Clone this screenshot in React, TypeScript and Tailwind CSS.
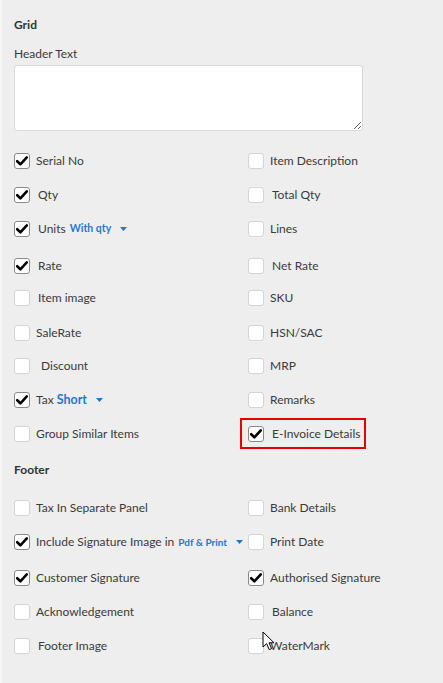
type Item = {
  label: string;
  checked?: boolean;
  pad?: string;
  extra?: "units" | "tax" | "pdf";
  boxed?: boolean;
};

type Row = { h: string; left: Item; right: Item };

const gridRows: Row[] = [
  { h: "h-[34px]", left: { label: "Serial No", checked: true }, right: { label: "Item Description" } },
  { h: "h-[34px]", left: { label: "Qty", checked: true, pad: "pl-[2px]" }, right: { label: "Total Qty", pad: "pl-[2px]" } },
  { h: "h-[37px]", left: { label: "Units", checked: true, pad: "pl-[2px]", extra: "units" }, right: { label: "Lines" } },
  { h: "h-[32px]", left: { label: "Rate", checked: true, pad: "pl-[2px]" }, right: { label: "Net Rate", pad: "pl-[2px]" } },
  { h: "h-[35px]", left: { label: "Item image", pad: "pl-[2px]" }, right: { label: "SKU" } },
  { h: "h-[33px]", left: { label: "SaleRate" }, right: { label: "HSN/SAC" } },
  { h: "h-[34px]", left: { label: "Discount", pad: "pl-[5px]" }, right: { label: "MRP" } },
  { h: "h-[34px]", left: { label: "Tax", checked: true, extra: "tax" }, right: { label: "Remarks" } },
  { h: "h-[34px]", left: { label: "Group Similar Items" }, right: { label: "E-Invoice Details", checked: true, pad: "pl-[2px]", boxed: true } },
];

const footerRows: Row[] = [
  { h: "h-[34px]", left: { label: "Tax In Separate Panel" }, right: { label: "Bank Details" } },
  { h: "h-[36px]", left: { label: "Include Signature Image in", checked: true, extra: "pdf" }, right: { label: "Print Date" } },
  { h: "h-[34px]", left: { label: "Customer Signature", checked: true }, right: { label: "Authorised Signature", checked: true } },
  { h: "h-[34px]", left: { label: "Acknowledgement" }, right: { label: "Balance", pad: "pl-[2px]" } },
  { h: "h-[34px]", left: { label: "Footer Image", pad: "pl-[2px]" }, right: { label: "WaterMark" } },
];

function Caret() {
  return (
    <svg width="7" height="4" viewBox="0 0 7 4" className="ml-[9px]">
      <path d="M0 0 L7 0 L3.5 4 Z" fill="#1e78d2" />
    </svg>
  );
}

function Box({ checked }: { checked?: boolean }) {
  return (
    <span
      className={`flex h-4 w-4 shrink-0 items-center justify-center rounded-[3px] border bg-white ${
        checked ? "border-[#8a8a8a]" : "border-[#d4d4d4]"
      }`}
    >
      {checked && (
        <svg width="12" height="10" viewBox="0 0 12 10">
          <path d="M1.2 5.2 L4.4 8.3 L10.8 1.4" fill="none" stroke="#000" strokeWidth="2.6" strokeLinecap="round" strokeLinejoin="round" />
        </svg>
      )}
    </span>
  );
}

function Check({ item }: { item: Item }) {
  return (
    <div className="relative flex h-[34px] items-center">
      {item.boxed && (
        <span className="pointer-events-none absolute left-[-8px] top-[1px] h-[31px] w-[126px] border-2 border-[#e60000]" />
      )}
      <Box checked={item.checked} />
      <span className={`ml-[6px] flex items-center whitespace-nowrap text-[12px] text-[#3a3a3a] ${item.pad ?? ""}`}>
        {item.label}
        {item.extra === "units" && (
          <>
            <span className="ml-[4px] text-[10.5px] font-bold text-[#1e78d2]">With qty</span>
            <Caret />
          </>
        )}
        {item.extra === "tax" && (
          <>
            <span className="ml-[3px] text-[12.5px] font-bold text-[#1e78d2]">Short</span>
            <Caret />
          </>
        )}
        {item.extra === "pdf" && (
          <>
            <span className="ml-[4px] text-[10px] font-bold text-[#1e78d2]">Pdf &amp; Print</span>
            <Caret />
          </>
        )}
      </span>
    </div>
  );
}

function Rows({ rows }: { rows: Row[] }) {
  return (
    <div className="flex flex-col">
      {rows.map((r) => (
        <div key={r.left.label} className={`grid grid-cols-[234px_1fr] items-start ${r.h}`}>
          <Check item={r.left} />
          <Check item={r.right} />
        </div>
      ))}
    </div>
  );
}

export default function App() {
  return (
    <div
      className="relative min-h-[683px] w-[443px] border-l-2 border-[#f6f6f6] bg-[#eeeeee] pl-3 pt-[17px]"
      style={{ fontFamily: "Lato, 'Open Sans', sans-serif" }}
    >
      <div className="h-4 text-[12px] font-bold leading-4 text-[#333]">Grid</div>
      <div className="mt-[13px] h-4 text-[12px] leading-4 text-[#3a3a3a]">Header Text</div>
      <textarea className="mt-[3px] block h-[66px] w-[349px] resize rounded-[3px] border border-[#d9d9d9] bg-white outline-none" />
      <div className="mt-[13px]">
        <Rows rows={gridRows} />
      </div>
      <div className="mt-[11px] h-4 text-[12px] font-bold leading-4 text-[#333]">Footer</div>
      <div className="mt-[13px]">
        <Rows rows={footerRows} />
      </div>

      <svg
        width="13"
        height="20"
        viewBox="0 0 13 20"
        className="pointer-events-none absolute left-[260px] top-[631px]"
      >
        <path d="M1 1 L1 16 L4.6 12.6 L7.2 18.6 L9.6 17.6 L7 11.8 L12 11.8 Z" fill="#fff" stroke="#000" strokeWidth="1" strokeLinejoin="round" />
      </svg>
    </div>
  );
}
